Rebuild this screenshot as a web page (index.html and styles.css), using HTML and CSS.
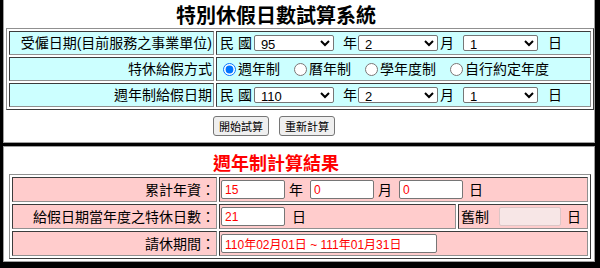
FILE: index.html
```html
<!DOCTYPE html>
<html lang="zh-Hant">
<head>
    <meta charset="UTF-8">
    <meta name="viewport" content="width=device-width, initial-scale=1.0">
    <title>特別休假日數試算系統</title>
    <link rel="stylesheet" href="styles.css">
</head>
<body>
    <div class="panel panel-top">
        <h1 class="title">特別休假日數試算系統</h1>
        <table class="grid grid-form">
            <tr>
                <td class="label">受僱日期(目前服務之事業單位)</td>
                <td class="field">
                    <div class="line">
                        <span class="sp2">民 國</span>
                        <select class="sel sp2"><option>95</option></select>
                        <span class="sp9">年</span>
                        <select class="sel sp1"><option>2</option></select>
                        <span class="sp2">月</span>
                        <select class="sel sel-day sp9"><option>1</option></select>
                        <span class="sp10">日</span>
                    </div>
                </td>
            </tr>
            <tr>
                <td class="label">特休給假方式</td>
                <td class="field">
                    <div class="line">
                        <label class="opt"><input type="radio" name="mode" checked>週年制</label>
                        <label class="opt"><input type="radio" name="mode">曆年制</label>
                        <label class="opt"><input type="radio" name="mode">學年度制</label>
                        <label class="opt"><input type="radio" name="mode">自行約定年度</label>
                    </div>
                </td>
            </tr>
            <tr>
                <td class="label">週年制給假日期</td>
                <td class="field">
                    <div class="line">
                        <span class="sp2">民 國</span>
                        <select class="sel sp2"><option>110</option></select>
                        <span class="sp9">年</span>
                        <select class="sel sp1"><option>2</option></select>
                        <span class="sp2">月</span>
                        <select class="sel sel-day sp9"><option>1</option></select>
                        <span class="sp10">日</span>
                    </div>
                </td>
            </tr>
        </table>
        <div class="actions">
            <button type="button">開始試算</button>
            <button type="button">重新計算</button>
        </div>
    </div>

    <div class="panel panel-result">
        <h2 class="title title-result">週年制計算結果</h2>
        <table class="grid grid-result">
            <tr>
                <td class="label">累計年資：</td>
                <td class="field" colspan="2">
                    <div class="line">
                        <input class="num" type="text" value="15">
                        <span class="sp4">年</span>
                        <input class="num sp7" type="text" value="0">
                        <span class="sp4">月</span>
                        <input class="num sp7" type="text" value="0">
                        <span class="sp6">日</span>
                    </div>
                </td>
            </tr>
            <tr>
                <td class="label">給假日期當年度之特休日數：</td>
                <td class="field field-mid">
                    <div class="line">
                        <input class="num" type="text" value="21">
                        <span class="sp7">日</span>
                    </div>
                </td>
                <td class="field field-old">
                    <div class="line">
                        <span class="sp1">舊制</span>
                        <input class="num num-off sp10" type="text" disabled>
                        <span class="sp6">日</span>
                    </div>
                </td>
            </tr>
            <tr>
                <td class="label">請休期間：</td>
                <td class="field" colspan="2">
                    <div class="line">
                        <input class="num num-wide" type="text" value="110年02月01日 ~ 111年01月31日">
                    </div>
                </td>
            </tr>
        </table>
    </div>
</body>
</html>
```

FILE: styles.css
```css
body {
    margin: 0;
    padding: 0 5px 6px 3px;
    background-color: #000;
    font-family: "Liberation Sans", "Noto Sans CJK TC", sans-serif;
    font-size: 14px;
    color: #000;
}
.panel {
    background-color: #fff;
    border: 1px solid #a0a0a0;
}
.panel-top {
    border-top: none;
    height: 142px;
}
.panel-result {
    margin-top: 3px;
    height: 114px;
}
.title {
    margin: 0;
    padding-right: 46px;
    height: 28px;
    line-height: 30px;
    text-align: center;
    font-family: "Noto Sans CJK TC", sans-serif;
    font-size: 20px;
    font-weight: bold;
}
.title-result {
    height: 27px;
    line-height: 31px;
    font-size: 18px;
    color: #ff0000;
}
.grid {
    border: 1px outset #909090;
    border-spacing: 2px;
}
.grid td {
    box-sizing: border-box;
    border: 1px inset #909090;
    padding: 0 1px;
    vertical-align: middle;
    line-height: 18px;
    font-family: "Liberation Sans", "Noto Sans CJK TC", sans-serif;
}
.grid-form {
    margin-left: 2px;
    width: 588px;
}
.grid-form td {
    height: 24px;
    background-color: #ccffff;
}
.grid-result {
    margin-left: 5px;
    width: 582px;
}
.grid-result td {
    height: 25px;
    background-color: #ffcccc;
}
.label {
    width: 205px;
    text-align: right;
}
.field-old {
    width: 130px;
}
.line {
    display: flex;
    align-items: center;
    white-space: nowrap;
}
.sel {
    box-sizing: border-box;
    width: 80px;
    height: 16px;
    padding: 0 0 0 2px;
    border: 1px solid #767676;
    border-radius: 2px;
    background-color: #fff;
    font-family: "Liberation Sans", sans-serif;
    font-size: 13px;
    line-height: 14px;
}
.sel-day {
    width: 75px;
}
.opt {
    display: flex;
    align-items: center;
    margin-right: 9px;
}
.opt input {
    margin: 0 2px 0 5px;
    width: 13px;
    height: 13px;
}
.num {
    box-sizing: border-box;
    width: 64px;
    height: 19px;
    padding: 0 3px;
    border: 1px solid #767676;
    border-radius: 2px;
    font-family: "Liberation Sans", "Noto Sans CJK TC", sans-serif;
    font-size: 12px;
    color: #ff0000;
    background-color: #fff;
}
.num-off {
    width: 62px;
    border-color: #dcc6c6;
    background-color: #f7e6e6;
}
.num-wide {
    width: 216px;
}
.actions {
    display: flex;
    justify-content: center;
    gap: 10px;
    margin-top: 6px;
    padding-right: 50px;
}
.actions button {
    box-sizing: border-box;
    width: 56px;
    height: 20px;
    padding: 0;
    border: 1px solid #767676;
    border-radius: 3px;
    background-color: #efefef;
    font-family: "Noto Sans CJK TC", sans-serif;
    font-size: 11px;
    line-height: 18px;
    color: #000;
}
.sp1 { margin-left: 1px; }
.sp2 { margin-left: 2px; }
.sp4 { margin-left: 4px; }
.sp6 { margin-left: 6px; }
.sp7 { margin-left: 7px; }
.sp9 { margin-left: 9px; }
.sp10 { margin-left: 10px; }
```
